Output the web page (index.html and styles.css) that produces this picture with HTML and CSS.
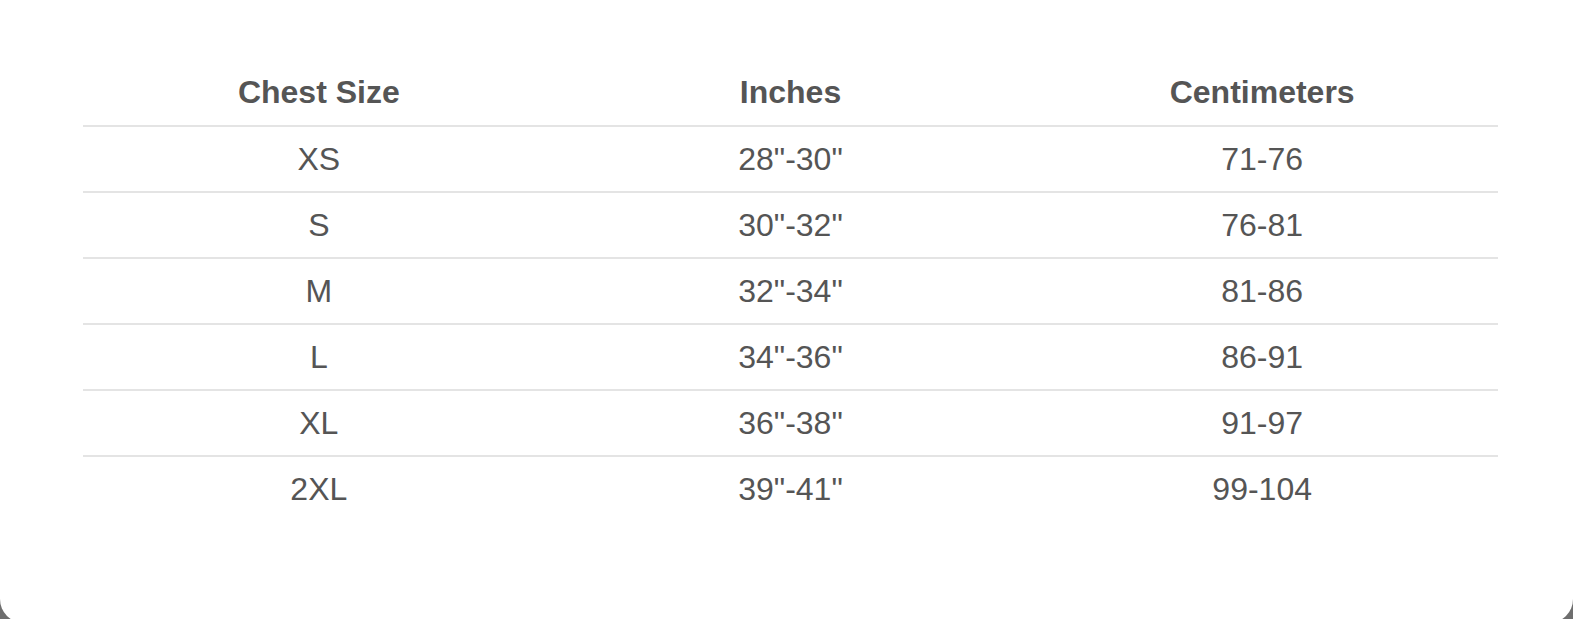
FILE: index.html
```html
<!DOCTYPE html>
<html>
<head>
<meta charset="utf-8">
<link rel="stylesheet" href="styles.css">
</head>
<body>
<div class="card">
  <table class="size-table">
    <thead>
      <tr><th>Chest Size</th><th>Inches</th><th>Centimeters</th></tr>
    </thead>
    <tbody>
      <tr><td>XS</td><td>28"-30"</td><td>71-76</td></tr>
      <tr><td>S</td><td>30"-32"</td><td>76-81</td></tr>
      <tr><td>M</td><td>32"-34"</td><td>81-86</td></tr>
      <tr><td>L</td><td>34"-36"</td><td>86-91</td></tr>
      <tr><td>XL</td><td>36"-38"</td><td>91-97</td></tr>
      <tr><td>2XL</td><td>39"-41"</td><td>99-104</td></tr>
    </tbody>
  </table>
</div>
</body>
</html>
```
FILE: styles.css
```css
html, body {
  margin: 0;
  padding: 0;
  background: #6e6e6e;
}
body {
  width: 1573px;
  height: 619px;
  overflow: hidden;
}
.card {
  background: #ffffff;
  height: 623px;
  border-radius: 0 0 24px 24px;
  box-sizing: border-box;
  padding: 59px 75px 0 83px;
  font-family: "Liberation Sans", Arial, Helvetica, sans-serif;
  color: #555555;
}
.size-table {
  width: 100%;
  border-collapse: collapse;
  table-layout: fixed;
}
.size-table th {
  font-size: 32px;
  font-weight: bold;
  height: 66px;
  padding: 0;
  text-align: center;
  vertical-align: middle;
  border-bottom: 2px solid #e4e4e4;
}
.size-table td {
  font-size: 32px;
  height: 64px;
  padding: 0;
  text-align: center;
  vertical-align: middle;
  border-bottom: 2px solid #e4e4e4;
}
.size-table tbody tr:last-child td {
  border-bottom: none;
}
```
